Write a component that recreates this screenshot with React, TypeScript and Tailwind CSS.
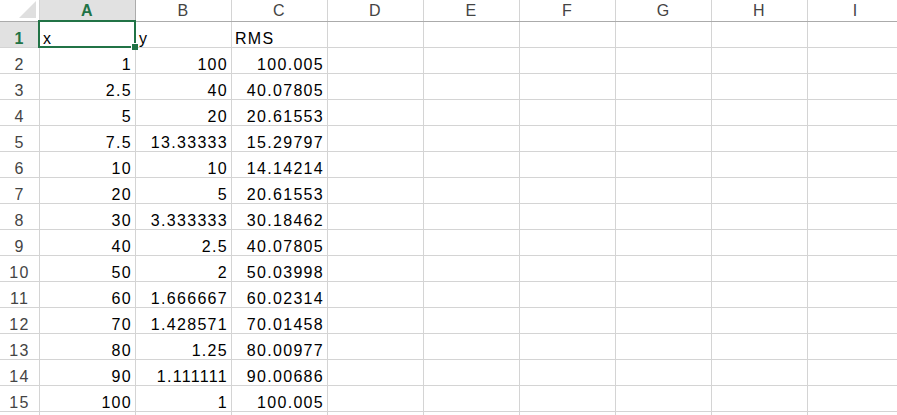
import React from 'react';

const columns = ['A', 'B', 'C', 'D', 'E', 'F', 'G', 'H', 'I'];

const rows: (string | number)[][] = [
  ['x', 'y', 'RMS'],
  [1, 100, '100.005'],
  [2.5, 40, '40.07805'],
  [5, 20, '20.61553'],
  [7.5, '13.33333', '15.29797'],
  [10, 10, '14.14214'],
  [20, 5, '20.61553'],
  [30, '3.333333', '30.18462'],
  [40, 2.5, '40.07805'],
  [50, 2, '50.03998'],
  [60, '1.666667', '60.02314'],
  [70, '1.428571', '70.01458'],
  [80, 1.25, '80.00977'],
  [90, '1.111111', '90.00686'],
  [100, 1, '100.005'],
];

export default function App() {
  return (
    <div
      className="w-[897px] h-[415px] overflow-hidden bg-white text-black text-[16px] tracking-[1.3px]"
      style={{ fontFamily: '"Liberation Sans", Arial, sans-serif' }}
    >
      {/* Column header */}
      <div className="flex h-[22px] border-b border-[#ababab]">
        <div className="relative w-[40px] shrink-0 border-r border-[#d4d4d4]">
          <svg className="absolute right-[3px] bottom-[3px]" width="17" height="17" viewBox="0 0 17 17">
            <polygon points="17,0 17,17 0,17" fill="#dfdfdf" />
          </svg>
        </div>
        {columns.map((c) => (
          <div
            key={c}
            className={
              c === 'A'
                ? 'w-[96px] shrink-0 border-r border-[#ababab] bg-[#e1e1e1] flex items-center justify-center font-bold text-[#217346] leading-none'
                : 'w-[96px] shrink-0 border-r border-[#d4d4d4] flex items-center justify-center text-[#444] leading-none'
            }
          >
            {c}
          </div>
        ))}
      </div>

      {/* Rows */}
      {rows.map((row, r) => (
        <div key={r} className="flex h-[26px]">
          <div
            className={
              r === 0
                ? 'w-[40px] shrink-0 border-r border-b border-[#d4d4d4] bg-[#e1e1e1] flex items-end justify-center leading-[16px] font-bold text-[#217346]'
                : 'w-[40px] shrink-0 border-r border-b border-[#d4d4d4] flex items-end justify-center leading-[16px] text-[#444]'
            }
          >
            {r + 1}
          </div>
          {columns.map((c, ci) => {
            const v = row[ci];
            const isNum = typeof v === 'number' || (v !== undefined && /^[0-9.]+$/.test(String(v)));
            return (
              <div
                key={c}
                className={
                  isNum
                    ? 'relative w-[96px] shrink-0 border-r border-b border-[#d4d4d4] flex items-end justify-end pr-[3px] leading-[16px] whitespace-nowrap'
                    : 'relative w-[96px] shrink-0 border-r border-b border-[#d4d4d4] flex items-end justify-start pl-[3px] leading-[16px] whitespace-nowrap'
                }
              >
                {v !== undefined ? String(v) : ''}
                {r === 0 && ci === 0 && (
                  <div className="absolute z-10 -left-[2px] -top-[2px] -right-[1px] -bottom-[1px] border-2 border-[#217346] pointer-events-none">
                    <div className="absolute -right-[4px] -bottom-[4px] w-[7px] h-[7px] bg-[#217346] border-l border-t border-white" />
                  </div>
                )}
              </div>
            );
          })}
        </div>
      ))}

      {/* Next row, mostly below the fold */}
      <div className="flex h-[26px]">
        <div className="w-[40px] shrink-0 border-r border-[#d4d4d4]" />
        {columns.map((c) => (
          <div key={c} className="w-[96px] shrink-0 border-r border-[#d4d4d4]" />
        ))}
      </div>
    </div>
  );
}
